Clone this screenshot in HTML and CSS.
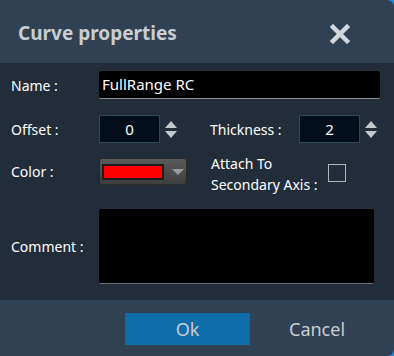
FILE: index.html
```html
<!DOCTYPE html>
<html>
<head>
<meta charset="utf-8">
<link rel="stylesheet" href="styles.css">
</head>
<body>
<div class="dialog">
  <div class="header">
    <div class="title">Curve properties</div>
    <svg class="close" width="20" height="20" viewBox="0 0 20 20"><path d="M3 3 L17 17 M17 3 L3 17" stroke="#d4d8dc" stroke-width="4.5" stroke-linecap="square"/></svg>
  </div>
  <div class="body">
    <div class="row row-name">
      <div class="label">Name :</div>
      <div class="text-input">FullRange RC</div>
    </div>
    <div class="row row-offset">
      <div class="label">Offset :</div>
      <div class="spin">
        <div class="spin-box">0</div>
        <div class="arrows"><span class="up"></span><span class="down"></span></div>
      </div>
      <div class="label label-right">Thickness :</div>
      <div class="spin">
        <div class="spin-box">2</div>
        <div class="arrows"><span class="up"></span><span class="down"></span></div>
      </div>
    </div>
    <div class="row row-color">
      <div class="label">Color :</div>
      <div class="combo">
        <div class="swatch"></div>
        <span class="combo-arrow"></span>
      </div>
      <div class="label label-right attach">Attach To<br>Secondary Axis :</div>
      <div class="checkbox"></div>
    </div>
    <div class="row row-comment">
      <div class="label">Comment :</div>
      <div class="textarea"></div>
    </div>
  </div>
  <div class="footer">
    <div class="btn ok">Ok</div>
    <div class="btn cancel">Cancel</div>
  </div>
</div>
</body>
</html>
```
FILE: styles.css
```css
html, body {
  margin: 0;
  padding: 0;
  background: #1e8ad6;
}
body {
  width: 394px;
  height: 356px;
  overflow: hidden;
  font-family: "Noto Sans", "Open Sans", sans-serif;
}
.dialog {
  width: 394px;
  height: 356px;
  background: #2f4152;
  border-radius: 0 7px 7px 0;
  overflow: hidden;
  display: flex;
  flex-direction: column;
}
.header {
  height: 63px;
  display: flex;
  align-items: center;
  justify-content: space-between;
  padding: 0 43px 0 18px;
  box-sizing: border-box;
}
.title {
  color: #c9cdd1;
  font-weight: bold;
  font-size: 19px;
  margin-top: 3px;
}
.close {
  margin-top: 4px;
  margin-right: 1px;
}
.body {
  background: #222d39;
  height: 237px;
  display: flex;
  flex-direction: column;
  box-sizing: border-box;
  padding: 8px 0 0 11px;
}
.row {
  display: flex;
  align-items: center;
}
.label {
  color: #ffffff;
  font-size: 14px;
  width: 88px;
}
.text-input {
  width: 281px;
  height: 28px;
  box-sizing: border-box;
  background: #000;
  border-bottom: 1px solid #8a8f94;
  border-radius: 2px;
  color: #fff;
  font-size: 15px;
  line-height: 27px;
  padding-left: 3px;
}
.row-offset {
  margin-top: 16px;
}
.spin {
  display: flex;
  align-items: center;
}
.spin-box {
  width: 61px;
  height: 28px;
  box-sizing: border-box;
  background: #020e1a;
  border: 1px solid #2c4a5c;
  color: #fff;
  font-size: 15px;
  text-align: center;
  line-height: 26px;
}
.arrows {
  display: flex;
  flex-direction: column;
  margin-left: 5px;
  gap: 3px;
}
.up, .down {
  width: 0;
  height: 0;
  border-left: 6px solid transparent;
  border-right: 6px solid transparent;
}
.up { border-bottom: 7px solid #c4c8cc; }
.down { border-top: 7px solid #c4c8cc; }
.label-right {
  margin-left: 33px;
  width: 89px;
}
.row-color {
  margin-top: 15px;
  height: 27px;
}
.combo {
  width: 88px;
  height: 27px;
  box-sizing: border-box;
  background: linear-gradient(#5a5a5a, #3e3e3e);
  border-radius: 3px;
  border: 1px solid #2a2a2a;
  display: flex;
  align-items: center;
  padding-left: 2px;
}
.swatch {
  width: 62px;
  height: 16px;
  box-sizing: border-box;
  background: #ff0000;
  border: 2px solid #1c1c1c;
}
.combo-arrow {
  margin-left: 8px;
  width: 0;
  height: 0;
  border-left: 6px solid transparent;
  border-right: 6px solid transparent;
  border-top: 6px solid #9a9a9a;
}
.attach {
  width: auto;
  line-height: 21px;
  margin-top: 4px;
  margin-left: 24px;
}
.checkbox {
  width: 18px;
  height: 18px;
  box-sizing: border-box;
  border: 1px solid #b4b8bc;
  margin-left: 10px;
  margin-top: 3px;
}
.row-comment {
  margin-top: 24px;
}
.textarea {
  width: 275px;
  height: 75px;
  box-sizing: border-box;
  background: #000;
  border-bottom: 1px solid #6a6e72;
  border-radius: 2px;
}
.footer {
  flex: 1;
  display: flex;
  align-items: flex-start;
  padding-top: 13px;
  padding-left: 125px;
}
.btn {
  height: 32px;
  line-height: 32px;
  font-size: 18px;
  color: #c9cdd1;
  text-align: center;
}
.ok {
  width: 125px;
  background: #0d6eaa;
}
.cancel {
  margin-left: 39px;
}
```
